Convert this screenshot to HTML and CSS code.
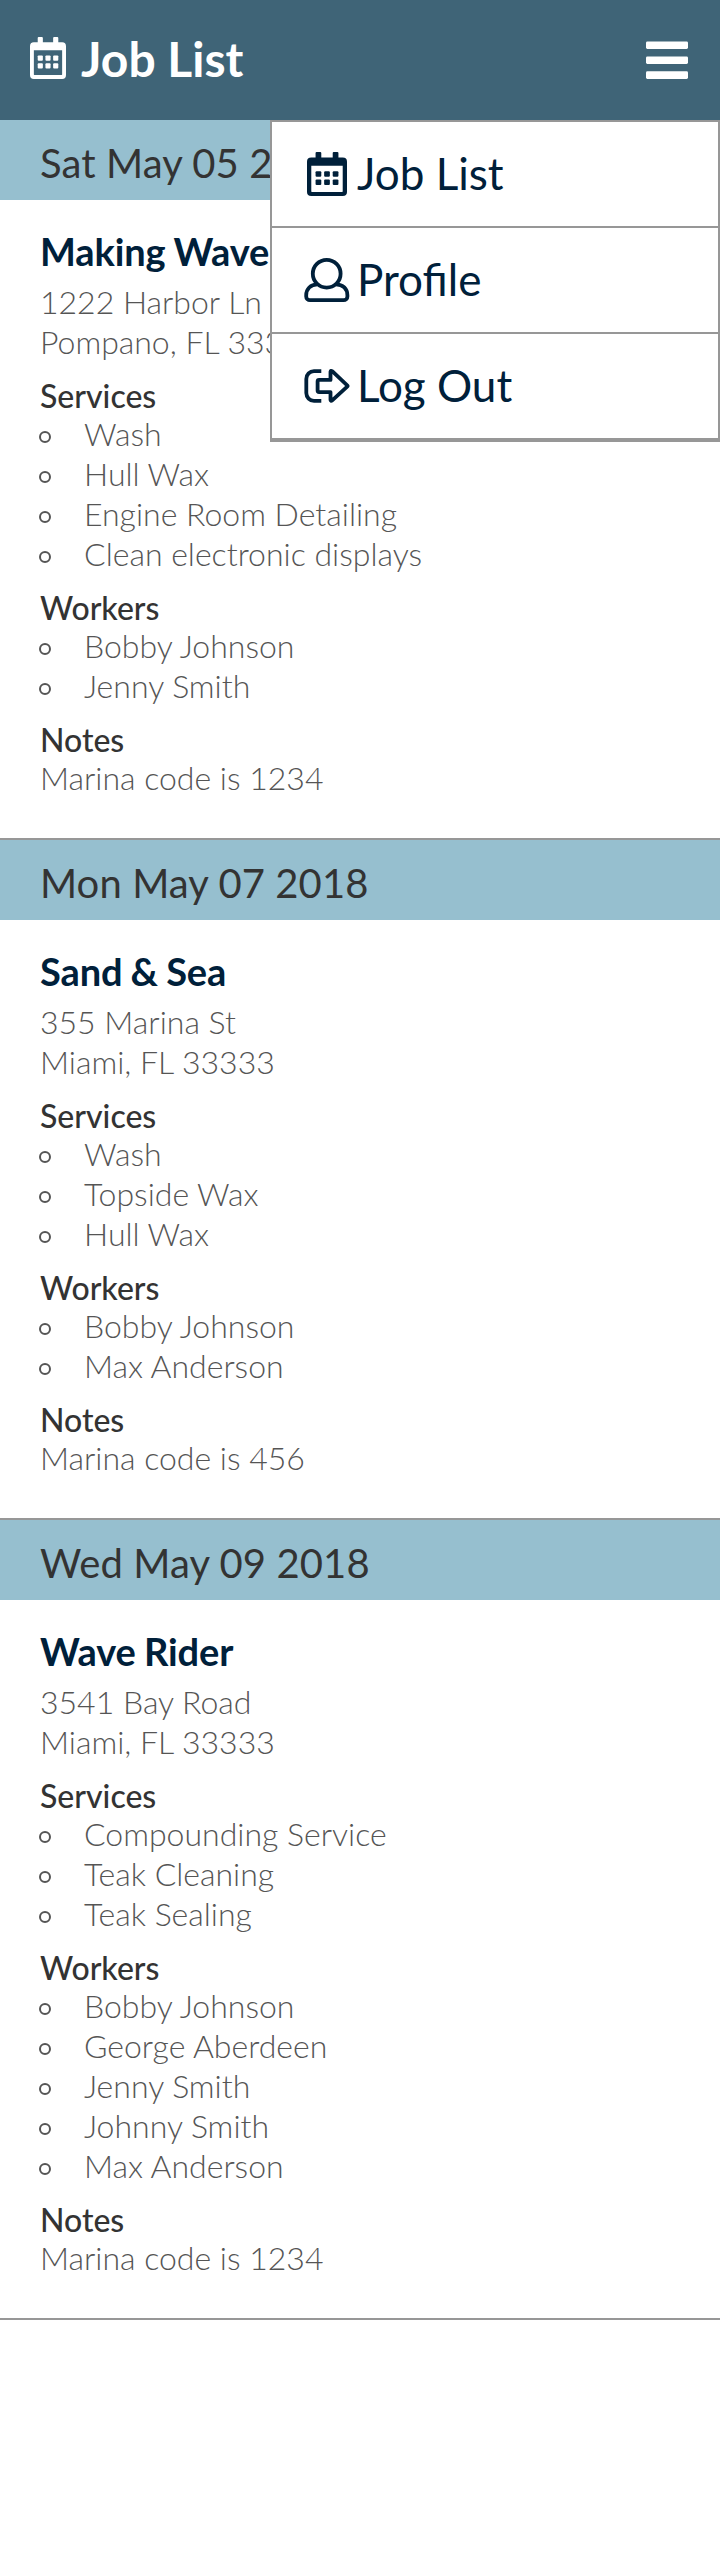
FILE: index.html
```html
<!DOCTYPE html>
<html lang="en">
<head>
<meta charset="utf-8">
<title>Job List</title>
<link rel="stylesheet" href="styles.css">
</head>
<body>
<svg class="defs" aria-hidden="true">
  <symbol id="calendar" viewBox="0 0 448 512" preserveAspectRatio="none">
    <path fill="currentColor" fill-rule="evenodd" d="M48 64H96V12Q96 0 108 0H148Q160 0 160 12V64H288V12Q288 0 300 0H340Q352 0 352 12V64H400Q448 64 448 112V464Q448 512 400 512H48Q0 512 0 464V112Q0 64 48 64ZM48 160V458Q48 464 54 464H394Q400 464 400 458V160Z"/>
    <g fill="currentColor">
      <rect x="96" y="224" width="64" height="64" rx="12"/><rect x="192" y="224" width="64" height="64" rx="12"/><rect x="288" y="224" width="64" height="64" rx="12"/>
      <rect x="96" y="320" width="64" height="64" rx="12"/><rect x="192" y="320" width="64" height="64" rx="12"/><rect x="288" y="320" width="64" height="64" rx="12"/>
    </g>
  </symbol>
</svg>
<header class="topbar">
  <svg class="topbar-icon"><use href="#calendar"/></svg>
  <h1 class="topbar-title">Job List</h1>
  <svg class="burger" viewBox="0 0 42 38" fill="currentColor"><rect y=".4" width="42" height="7.6" rx="1.4"/><rect y="15.4" width="42" height="7.6" rx="1.4"/><rect y="30.3" width="42" height="7.6" rx="1.4"/></svg>
  <nav class="menu">
    <a class="menu-item"><svg class="menu-icon menu-icon-calendar"><use href="#calendar"/></svg><span class="menu-label">Job List</span></a>
    <a class="menu-item"><svg class="menu-icon" viewBox="0 0 46 46" fill="none" stroke="currentColor" stroke-width="3.8"><circle cx="22.7" cy="16.7" r="13.9"/><path d="M13.4 27.4C6.5 27.4 2.2 32 2.2 38.2V39.4A3.8 3.8 0 0 0 6 43.2H39.6A3.8 3.8 0 0 0 43.4 39.4V38.2C43.4 32 39 27.4 32 27.4"/></svg><span class="menu-label">Profile</span></a>
    <a class="menu-item"><svg class="menu-icon" viewBox="0 0 46 46" fill="none" stroke="currentColor" stroke-width="3.8"><path d="M17.3 8.2H10A7.7 7.7 0 0 0 2.3 15.9V30.1A7.7 7.7 0 0 0 10 37.8H17.3"/><path stroke-linejoin="round" d="M26.5 16.9H15.1Q13.6 16.9 13.6 18.4V27.6Q13.6 29.1 15.1 29.1H26.5V37Q26.8 38.6 28.2 37.4L43.2 23.7Q43.9 23 43.2 22.3L28.2 8.2Q26.8 7.2 26.5 8.8Z"/></svg><span class="menu-label">Log Out</span></a>
  </nav>
</header>
<main>
  <section class="job">
    <h2 class="job-date">Sat May 05 2018</h2>
    <div class="job-body">
      <h3 class="job-name">Making Waves</h3>
      <p class="line">1222 Harbor Ln</p>
      <p class="line">Pompano, FL 33333</p>
      <h4 class="label">Services</h4>
      <ul class="list"><li>Wash</li><li>Hull Wax</li><li>Engine Room Detailing</li><li>Clean electronic displays</li></ul>
      <h4 class="label">Workers</h4>
      <ul class="list"><li>Bobby Johnson</li><li>Jenny Smith</li></ul>
      <h4 class="label">Notes</h4>
      <p class="line">Marina code is 1234</p>
    </div>
  </section>
  <section class="job">
    <h2 class="job-date">Mon May 07 2018</h2>
    <div class="job-body">
      <h3 class="job-name">Sand &amp; Sea</h3>
      <p class="line">355 Marina St</p>
      <p class="line">Miami, FL 33333</p>
      <h4 class="label">Services</h4>
      <ul class="list"><li>Wash</li><li>Topside Wax</li><li>Hull Wax</li></ul>
      <h4 class="label">Workers</h4>
      <ul class="list"><li>Bobby Johnson</li><li>Max Anderson</li></ul>
      <h4 class="label">Notes</h4>
      <p class="line">Marina code is 456</p>
    </div>
  </section>
  <section class="job">
    <h2 class="job-date">Wed May 09 2018</h2>
    <div class="job-body">
      <h3 class="job-name">Wave Rider</h3>
      <p class="line">3541 Bay Road</p>
      <p class="line">Miami, FL 33333</p>
      <h4 class="label">Services</h4>
      <ul class="list"><li>Compounding Service</li><li>Teak Cleaning</li><li>Teak Sealing</li></ul>
      <h4 class="label">Workers</h4>
      <ul class="list"><li>Bobby Johnson</li><li>George Aberdeen</li><li>Jenny Smith</li><li>Johnny Smith</li><li>Max Anderson</li></ul>
      <h4 class="label">Notes</h4>
      <p class="line">Marina code is 1234</p>
    </div>
  </section>
</main>
</body>
</html>
```
FILE: styles.css
```css
*, *::before { box-sizing: border-box; margin: 0; padding: 0; }
body { min-height: 2576px; background: #fff; color: #555; font: 300 32px/40px Lato, sans-serif; }
.defs { position: absolute; width: 0; height: 0; }

.topbar { position: relative; display: flex; align-items: center; height: 120px; padding: 0 32px 0 30px; background: #3f6477; color: #fff; }
.topbar-icon { width: 36px; height: 42px; margin-top: -4px; }
.topbar-title { margin: -3px 0 0 15px; font-size: 48px; line-height: 58px; font-weight: 700; }
.burger { width: 42px; height: 38px; margin-left: auto; }

.menu { position: absolute; top: 120px; right: 0; width: 450px; border: 2px solid #979797; background: #fff; color: #00203a; }
.menu-item { display: flex; align-items: center; height: 106px; padding-left: 32px; border-bottom: 2px solid #979797; font-size: 44px; line-height: 54px; font-weight: 400; }
.menu-icon { width: 46px; height: 46px; margin-right: 7px; }
.menu-icon-calendar { width: 40px; height: 44px; margin: 0 10px 0 3px; }
.menu-label { margin-top: -3px; }

.job { border-bottom: 2px solid #979797; }
.job-date { height: 80px; padding: 19px 40px 0; background: #96bfcf; color: #333; font-size: 40px; line-height: 48px; font-weight: 400; letter-spacing: .1px; }
.job-body { padding: 27px 40px 40px; }
.job-name { height: 55px; color: #00203a; font-size: 38px; line-height: 48px; font-weight: 700; letter-spacing: -.1px; word-spacing: -1px; }
.label { margin-top: 15px; color: #333; font-size: 32px; line-height: 38px; font-weight: 500; }
.label + * { margin-top: -1px; }
.list { list-style: none; }
.list li { display: flex; align-items: center; }
.list li::before { content: ""; width: 12px; height: 12px; margin: 6px 33px 0 -1px; border: 2px solid #555; border-radius: 50%; }
```
